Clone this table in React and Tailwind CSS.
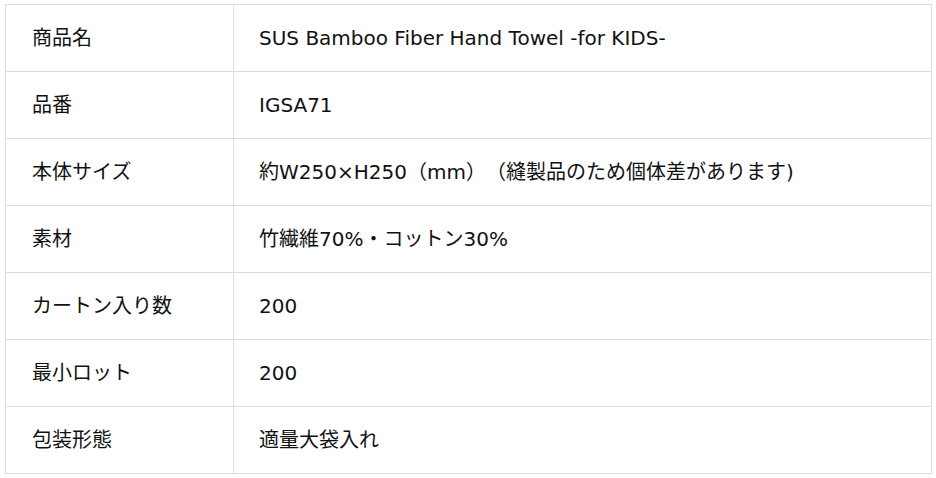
export default function App() {
  const rows = [
    ["商品名", "SUS Bamboo Fiber Hand Towel -for KIDS-"],
    ["品番", "IGSA71"],
    ["本体サイズ", "約W250×H250（mm）（縫製品のため個体差があります)"],
    ["素材", "竹繊維70%・コットン30%"],
    ["カートン入り数", "200"],
    ["最小ロット", "200"],
    ["包装形態", "適量大袋入れ"],
  ];
  return (
    <div className="bg-white w-[936px] h-[478px] pt-[4px] pl-[5px]" style={{ fontFamily: '"DejaVu Sans", "Noto Sans CJK JP", sans-serif' }}>
      <table className="border-collapse w-[927px] text-[20px] leading-[1.4] text-[#111] [text-spacing-trim:space-all]">
        <tbody>
          {rows.map(([k, v]) => (
            <tr key={k} className="h-[67px]">
              <td className="border border-[#dddddd] w-[228px] pl-[26px] p-0 align-middle">{k}</td>
              <td className="border border-[#dddddd] pl-[25px] p-0 align-middle">{v}</td>
            </tr>
          ))}
        </tbody>
      </table>
    </div>
  );
}
